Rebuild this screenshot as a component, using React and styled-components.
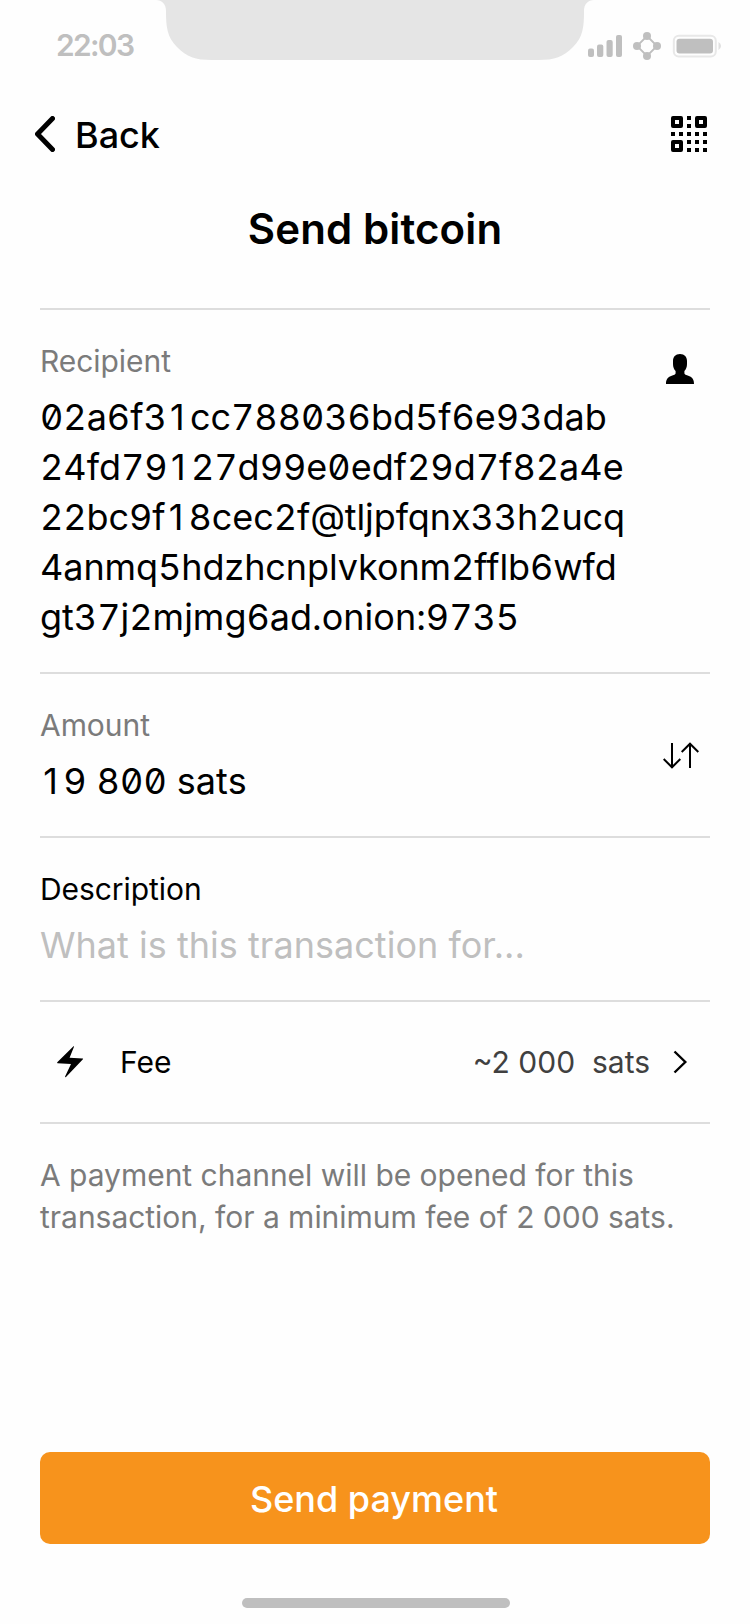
import React from 'react';
import styled, { createGlobalStyle } from 'styled-components';

const GlobalStyle = createGlobalStyle`
  *, *::before, *::after { box-sizing: border-box; }
  body {
    margin: 0;
    background: #fff;
    color: #000;
    font-family: Inter, "Liberation Sans", sans-serif;
  }
  svg { display: block; flex: none; }
`;

const Screen = styled.div`
  width: 750px;
  height: 1624px;
  display: flex;
  flex-direction: column;
  background: #fefefe;
  overflow: hidden;
`;

const StatusBar = styled.header`
  height: 92px;
  display: flex;
  padding: 0 29px 0 56px;
  color: #bfbfbf;
`;

const Time = styled.time`
  flex: none;
  width: 100px;
  padding-top: 26px;
  font-size: 30px;
  font-weight: 600;
  line-height: 38px;
  letter-spacing: -1.7px;
`;

const StatusIcons = styled.div`
  display: flex;
  align-items: flex-start;
  gap: 10px;
  margin-left: -6px;
  padding-top: 31px;
`;

const NavBar = styled.nav`
  height: 84px;
  margin-bottom: 2px;
  display: flex;
  align-items: center;
  justify-content: space-between;
  padding: 0 43px 0 35px;
`;

const BackButton = styled.button`
  display: flex;
  align-items: center;
  gap: 20px;
  padding: 0;
  border: 0;
  background: none;
  color: inherit;
  font: 500 36px/50px Inter, "Liberation Sans", sans-serif;
`;

const BackLabel = styled.span`
  padding-top: 2px;
`;

const Title = styled.h1`
  height: 130px;
  margin: 0;
  padding-top: 21px;
  text-align: center;
  font-size: 42px;
  font-weight: 600;
  line-height: 60px;
  letter-spacing: 0.12px;
`;

const Form = styled.main`
  flex: 1;
  margin: 0 40px;
`;

const Section = styled.section`
  display: flex;
  justify-content: space-between;
  align-items: ${({ $align }) => $align || 'flex-start'};
  border-top: 2px solid #ddd;
  padding: 30px ${({ $end }) => $end || 0}px 30px 0;
`;

const Field = styled.div`
  display: flex;
  flex-direction: column;
  gap: 10px;
`;

const Label = styled.div`
  font-size: 30px;
  line-height: 42px;
  letter-spacing: -0.06px;
  color: ${({ $muted }) => ($muted ? '#7b7b7b' : '#000')};
`;

const Value = styled.div`
  font-size: 36px;
  line-height: 50px;
  white-space: pre;
  letter-spacing: ${({ $tracking }) => $tracking || 0}px;
  color: ${({ $placeholder }) => ($placeholder ? '#bfbfbf' : '#000')};
  font-feature-settings: ${({ $numeric }) => ($numeric ? '"tnum", "zero"' : 'normal')};
`;

/* A plain "1" without the foot serif, kept as wide as the tabular figures. */
const One = styled.span`
  display: inline-block;
  width: 0.645em;
  padding-right: 0.06em;
  text-align: center;
  font-feature-settings: normal;
`;

const FeeRow = styled.section`
  display: flex;
  align-items: center;
  height: 124px;
  padding: 0 22px 0 17px;
  border-top: 2px solid #ddd;
  border-bottom: 2px solid #ddd;
  font-size: 30px;
  line-height: 42px;
`;

const FeeName = styled.span`
  flex: 1;
  margin-left: 36px;
`;

const FeeValue = styled.span`
  margin-right: 23px;
  color: #404040;
  white-space: pre;
`;

const Note = styled.p`
  margin: 0;
  padding-top: 30px;
  color: #7b7b7b;
  font-size: 30px;
  line-height: 42px;
  letter-spacing: -0.025px;
  white-space: pre-line;
`;

const Footer = styled.footer`
  display: flex;
  flex-direction: column;
  padding: 0 40px 16px;
`;

const PayButton = styled.button`
  width: 100%;
  height: 92px;
  padding: 2px 2px 0 0;
  border: 0;
  border-radius: 10px;
  background: #f7931c;
  color: #fff;
  font: 500 36px/50px Inter, "Liberation Sans", sans-serif;
`;

const HomeIndicator = styled.div`
  width: 268px;
  height: 10px;
  margin: 54px 0 0 202px;
  border-radius: 5px;
  background: #bfbfbf;
`;

const Notch = () => (
  <svg width="438" height="60" viewBox="156 0 438 60" fill="#e5e5e5">
    <path d="M156 0C162 0 166 4 166 11C166 27 167 37 177 47C187 57 195 60 212 60H538C555 60 563 57 573 47C583 37 584 27 584 11C584 4 588 0 594 0Z" />
  </svg>
);

const Signal = () => (
  <svg width="34" height="30" viewBox="588 31 34 30" fill="#bfbfbf">
    <rect x="588" y="48.5" width="6" height="8.5" rx="2" />
    <rect x="597" y="44.5" width="6.3" height="12.5" rx="2" />
    <rect x="606.5" y="40" width="6.2" height="17" rx="2" />
    <rect x="616" y="35" width="6" height="22" rx="2" />
  </svg>
);

const Network = () => (
  <svg width="30" height="30" viewBox="632 31 30 30" fill="#bfbfbf">
    <path d="M647 36L657 46L647 56L637 46Z" fill="none" stroke="#bfbfbf" strokeWidth="1.8" />
    <circle cx="647" cy="36" r="4" />
    <circle cx="657" cy="46" r="4" />
    <circle cx="647" cy="56" r="4" />
    <circle cx="637" cy="46" r="4" />
  </svg>
);

const Battery = () => (
  <svg width="49" height="30" viewBox="672 31 49 30">
    <rect x="673.8" y="35.8" width="42" height="20.6" rx="5" fill="none" stroke="#e8e8e8" strokeWidth="2" />
    <rect x="676.5" y="38.7" width="36.5" height="14.8" rx="3" fill="#bfbfbf" />
    <path d="M718.5 42Q721 43.5 721 46Q721 48.5 718.5 50Z" fill="#e0e0e0" />
  </svg>
);

const ChevronLeft = () => (
  <svg width="20" height="36" viewBox="35 116 20 36" fill="none" stroke="#000" strokeWidth="5" strokeLinecap="round" strokeLinejoin="round">
    <path d="M52.5 118.5L37.5 134L52.5 149.5" />
  </svg>
);

const finders = [[0, 0], [24, 0], [0, 24]];
const dots = [
  [16, 0], [16, 8], [0, 16], [8, 16], [16, 16], [24, 16], [32, 16],
  [16, 24], [24, 24], [32, 24], [16, 32], [24, 32], [32, 32],
];

const QrCode = () => (
  <svg width="36" height="36" viewBox="0 0 36 36">
    {finders.map(([x, y]) => (
      <rect key={`${x}-${y}`} x={x + 2} y={y + 2} width="8" height="8" fill="none" stroke="#000" strokeWidth="4" strokeLinejoin="round" />
    ))}
    {dots.map(([x, y]) => (
      <rect key={`${x}-${y}`} x={x} y={y} width="4" height="4" />
    ))}
  </svg>
);

const Person = () => (
  <svg width="28" height="44" viewBox="666 340 28 44">
    <path d="M680 354C684.6 354 687 357 687 361V364C687 367 686 369.5 684.4 371V373.5C685 375 687 375.2 689.5 376.3C692.8 377.8 694 380 694 384H666C666 380 667.2 377.8 670.5 376.3C673 375.2 675 375 675.6 373.5V371C674 369.5 673 367 673 364V361C673 357 675.4 354 680 354Z" />
  </svg>
);

const SwapArrows = () => (
  <svg width="36" height="27" viewBox="663 742 36 27" fill="none" stroke="#000" strokeWidth="2">
    <path d="M672 743V767.5M663.7 759L672 767.3L680.3 759M690 768V743.5M681.7 752L690 743.7L698.3 752" />
  </svg>
);

const Bolt = () => (
  <svg width="27" height="32" viewBox="57 1046 27 32">
    <path d="M73.5 1046.2Q74.3 1046 73.9 1047L69.6 1057.8L82.8 1058.4Q83.5 1058.8 82.7 1059.6L66 1077Q64.8 1077.7 65.2 1076.3L71 1063.9L57.5 1063.3Q56.7 1062.8 57.5 1062Z" />
  </svg>
);

const ChevronRight = () => (
  <svg width="15" height="24" viewBox="673 1050 15 24" fill="none" stroke="#000" strokeWidth="2.4">
    <path d="M674.5 1051.5L685.3 1062L674.5 1072.5" />
  </svg>
);

const recipientLines = [
  { text: '02a6f31cc788036bd5f6e93dab', tracking: -0.03 },
  { text: '24fd79127d99e0edf29d7f82a4e', tracking: 0 },
  { text: '22bc9f18cec2f@tljpfqnx33h2ucq', tracking: -0.1 },
  { text: '4anmq5hdzhcnplvkonm2fflb6wfd', tracking: -0.09 },
  { text: 'gt37j2mjmg6ad.onion:9735', tracking: 0 },
];

const NumericValue = ({ text, tracking }) => (
  <Value $numeric $tracking={tracking}>
    {text.split(/(1)/).map((part, i) => (part === '1' ? <One key={i}>1</One> : part))}
  </Value>
);

export default function App() {
  return (
    <>
      <GlobalStyle />
      <Screen>
        <StatusBar>
          <Time>22:03</Time>
          <Notch />
          <StatusIcons>
            <Signal />
            <Network />
            <Battery />
          </StatusIcons>
        </StatusBar>
        <NavBar>
          <BackButton>
            <ChevronLeft />
            <BackLabel>Back</BackLabel>
          </BackButton>
          <QrCode />
        </NavBar>
        <Title>Send bitcoin</Title>
        <Form>
          <Section $end={16}>
            <Field>
              <Label $muted>Recipient</Label>
              <div>
                {recipientLines.map((line) => (
                  <NumericValue key={line.text} {...line} />
                ))}
              </div>
            </Field>
            <Person />
          </Section>
          <Section $align="center" $end={11}>
            <Field>
              <Label $muted>Amount</Label>
              <NumericValue text="19 800 sats" tracking={0.12} />
            </Field>
            <SwapArrows />
          </Section>
          <Section>
            <Field>
              <Label>Description</Label>
              <Value $placeholder $tracking={0.03}>What is this transaction for...</Value>
            </Field>
          </Section>
          <FeeRow>
            <Bolt />
            <FeeName>Fee</FeeName>
            <FeeValue>{'~2 000  sats'}</FeeValue>
            <ChevronRight />
          </FeeRow>
          <Note>{'A payment channel will be opened for this\ntransaction, for a minimum fee of 2 000 sats.'}</Note>
        </Form>
        <Footer>
          <PayButton>Send payment</PayButton>
          <HomeIndicator />
        </Footer>
      </Screen>
    </>
  );
}
